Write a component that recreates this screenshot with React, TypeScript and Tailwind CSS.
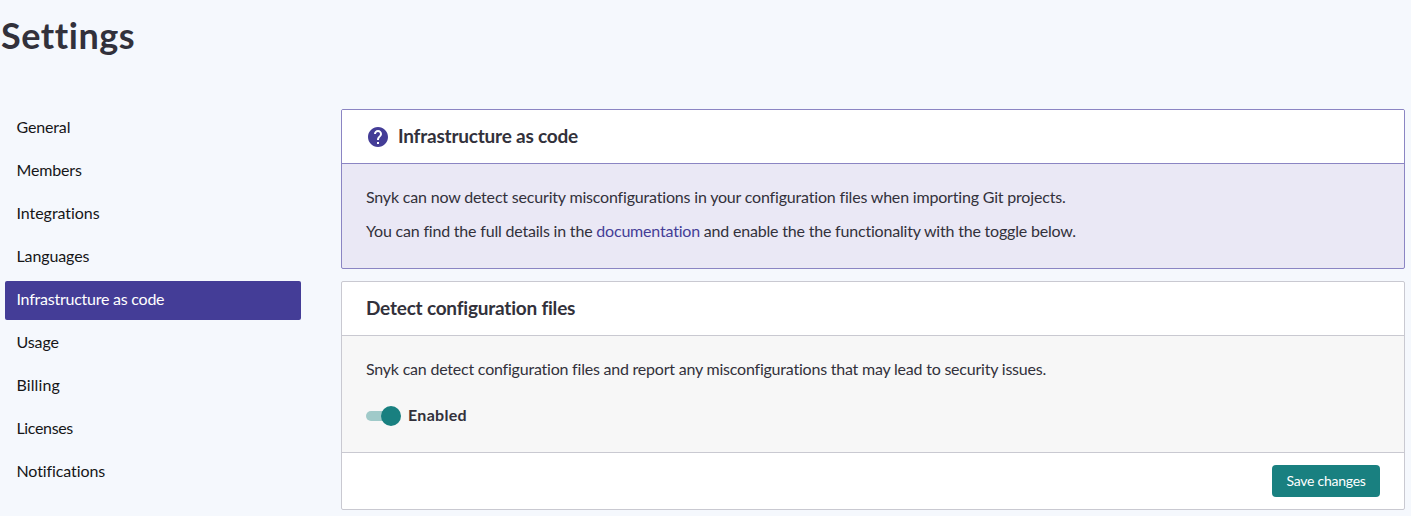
import type { ReactNode } from "react";

const navItems = [
  { label: "General", tracking: "tracking-[-0.15px]" },
  { label: "Members", tracking: "tracking-[-0.15px]" },
  { label: "Integrations", tracking: "tracking-[-0.05px]" },
  { label: "Languages", tracking: "tracking-[-0.12px]" },
  { label: "Infrastructure as code", tracking: "tracking-[-0.24px]" },
  { label: "Usage", tracking: "tracking-[-0.1px]" },
  { label: "Billing", tracking: "tracking-[0.1px]" },
  { label: "Licenses", tracking: "tracking-[-0.35px]" },
  { label: "Notifications", tracking: "tracking-[-0.1px]" },
];

function Sidebar({ active }: { active: string }) {
  return (
    <nav className="ml-[5px] flex w-[296px] shrink-0 flex-col gap-1">
      {navItems.map(({ label, tracking }) => (
        <a
          key={label}
          href="#"
          className={`flex h-[39px] items-center rounded-[2px] pl-[11.5px] pb-[3px] text-base ${tracking} ${
            label === active ? "bg-[#443d97] text-white" : "text-[#161618]"
          }`}
        >
          {label}
        </a>
      ))}
    </nav>
  );
}

function HelpIcon() {
  return (
    <svg viewBox="0 0 24 24" className="size-6 shrink-0 fill-[#443d97]" aria-hidden="true">
      <path d="M12 2C6.48 2 2 6.48 2 12s4.48 10 10 10 10-4.48 10-10S17.52 2 12 2zm1 17h-2v-2h2v2zm2.07-7.75l-.9.92C13.45 12.9 13 13.5 13 15h-2v-.5c0-1.1.45-2.1 1.17-2.83l1.24-1.26c.37-.36.59-.86.59-1.41 0-1.1-.9-2-2-2s-2 .9-2 2H8c0-2.21 1.79-4 4-4s4 1.79 4 4c0 .88-.36 1.68-.93 2.25z" />
    </svg>
  );
}

function Toggle({ label }: { label: string }) {
  return (
    <div className="flex items-center gap-[7px]">
      <button
        type="button"
        role="switch"
        aria-checked="true"
        aria-label={label}
        className="flex h-5 w-[35px] items-center"
      >
        <span className="-mr-2.5 h-2.5 w-[25px] rounded-full bg-[#a0cac9]" />
        <span className="size-5 shrink-0 rounded-full bg-[#198080]" />
      </button>
      <span className="pb-0.5 text-base leading-5 font-bold tracking-[0.3px]">{label}</span>
    </div>
  );
}

function PanelTitle({ children }: { children: ReactNode }) {
  return (
    <h2 className="pb-0.5 text-[19px] leading-6 font-bold tracking-[-0.21px]">{children}</h2>
  );
}

export default function App() {
  return (
    <div className="h-[516px] w-[1411px] overflow-hidden bg-[#f5f8fd] font-['Lato',sans-serif] text-[#32313b]">
      <h1 className="h-[109px] pt-[11px] pl-px text-[36px] leading-[48px] font-bold tracking-[0.55px]">
        Settings
      </h1>
      <div className="flex gap-10">
        <Sidebar active="Infrastructure as code" />
        <main className="flex w-[1064px] flex-col gap-3">
          <section className="h-40 overflow-hidden rounded-[2px] border border-[#8b85c3] bg-[#eae8f5]">
            <header className="flex h-[54px] items-center gap-2 border-b border-[#8b85c3] bg-white pl-6">
              <HelpIcon />
              <PanelTitle>Infrastructure as code</PanelTitle>
            </header>
            <div className="flex flex-col gap-2.5 px-6 pt-[21px] text-base leading-6">
              <p className="tracking-[-0.185px]">
                Snyk can now detect security misconfigurations in your configuration files when importing Git projects.
              </p>
              <p className="tracking-[-0.195px]">
                You can find the full details in the{" "}
                <a href="#" className="text-[#443d97]">
                  documentation
                </a>{" "}
                and enable the the functionality with the toggle below.
              </p>
            </div>
          </section>
          <section className="h-[229px] overflow-hidden rounded-[2px] border border-[#c9c9d1] bg-white">
            <header className="flex h-[54px] items-center border-b border-[#c9c9d1] pl-6">
              <PanelTitle>Detect configuration files</PanelTitle>
            </header>
            <div className="flex h-[117px] flex-col gap-6 border-b border-[#c9c9d1] bg-[#f7f7f7] px-6 pt-[21px]">
              <p className="text-base leading-6 tracking-[-0.215px]">
                Snyk can detect configuration files and report any misconfigurations that may lead to security issues.
              </p>
              <Toggle label="Enabled" />
            </div>
            <footer className="flex h-14 items-center justify-end pr-6">
              <button
                type="button"
                className="h-8 w-[108px] rounded-[4px] bg-[#198080] text-sm tracking-[-0.25px] text-white"
              >
                Save changes
              </button>
            </footer>
          </section>
        </main>
      </div>
    </div>
  );
}
